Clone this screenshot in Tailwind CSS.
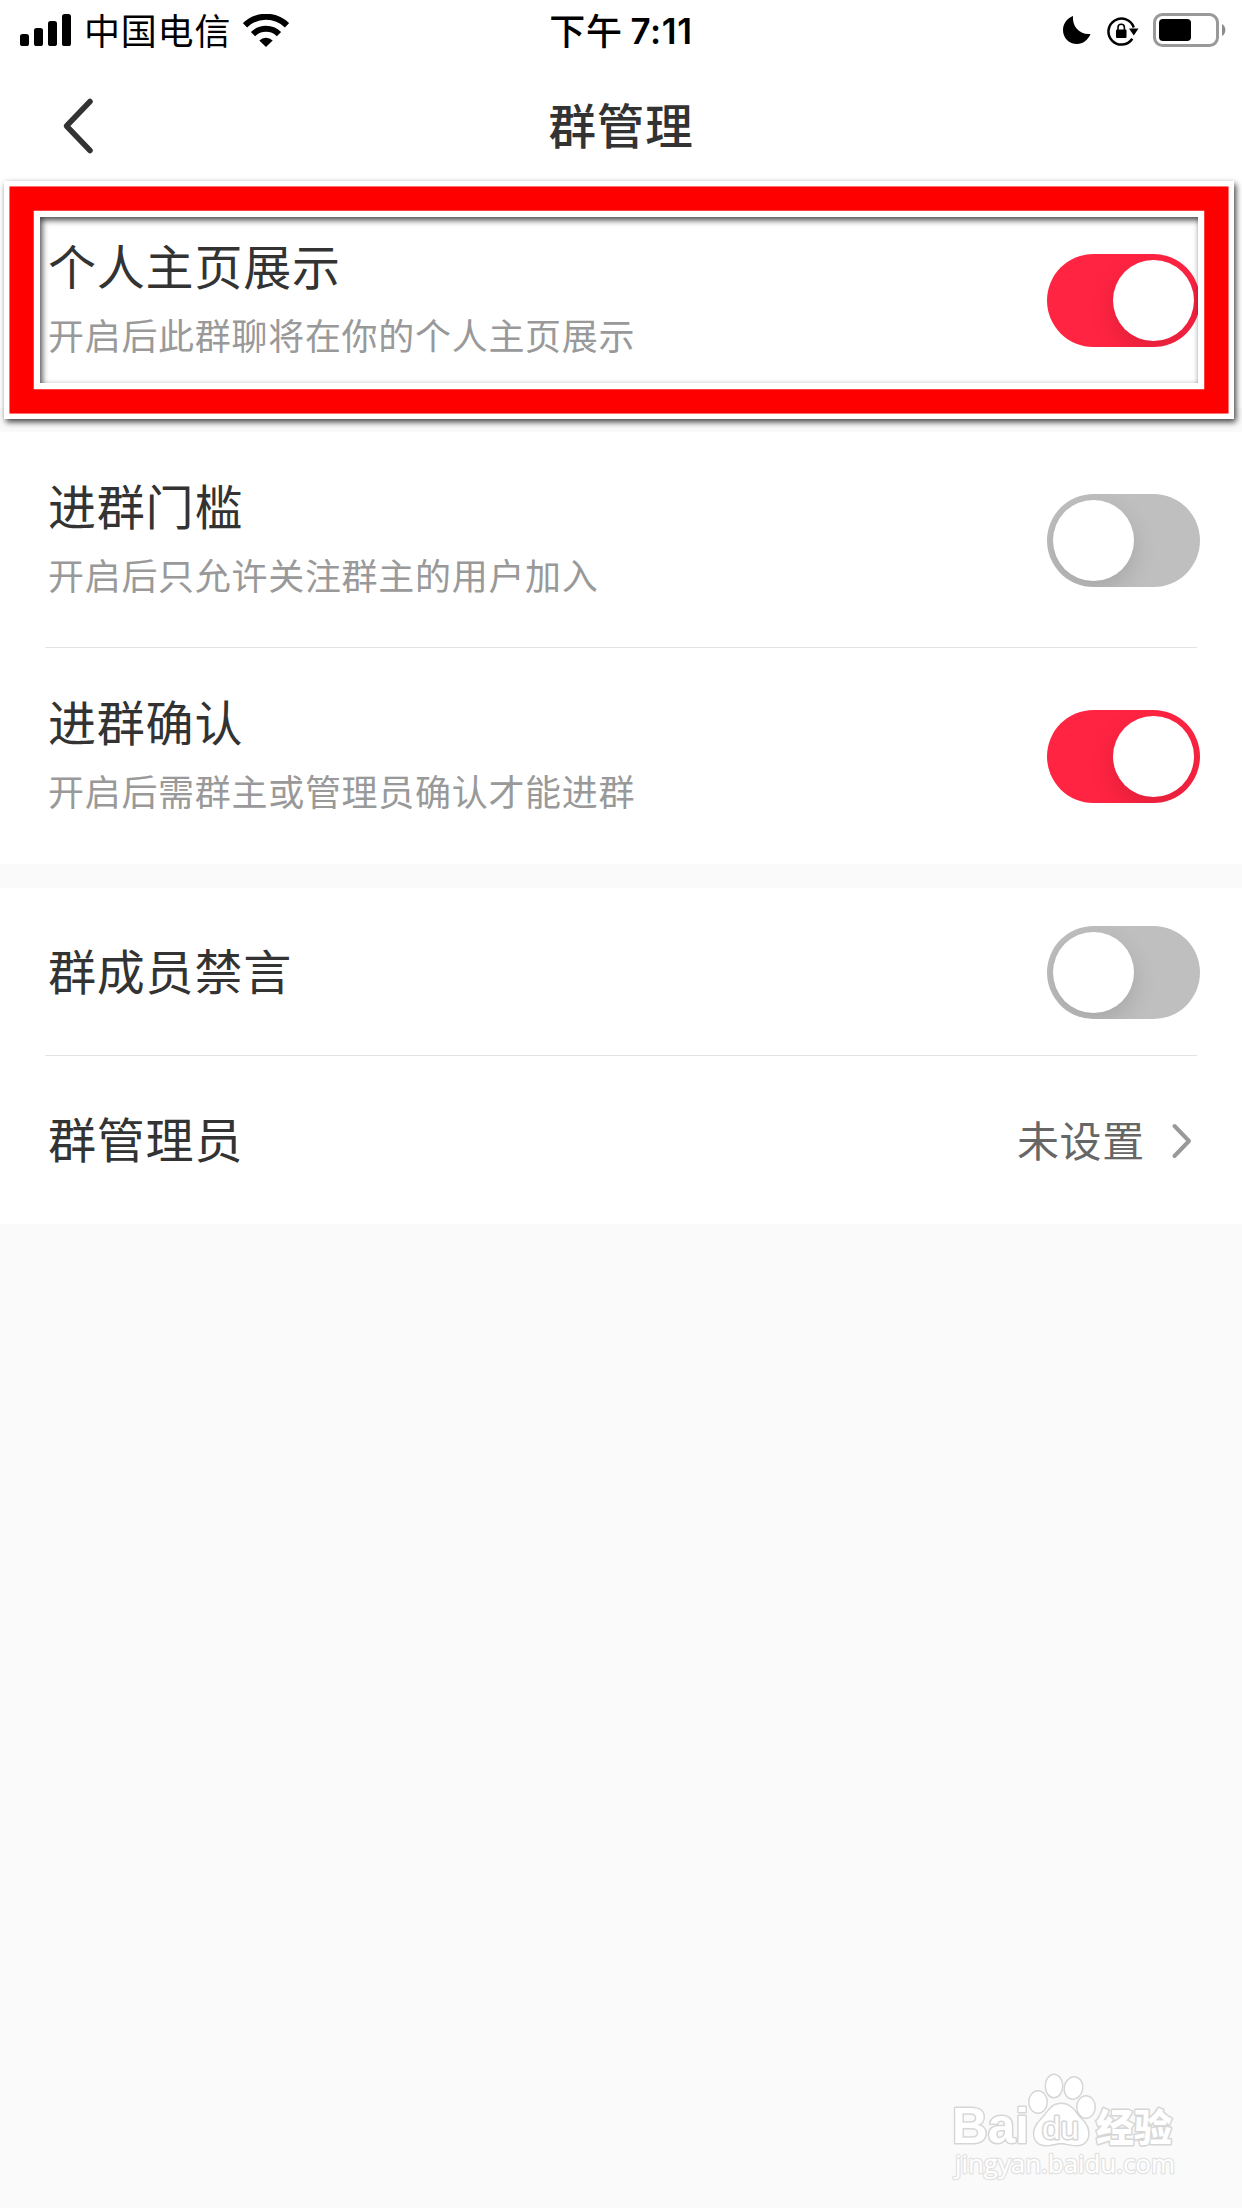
<!DOCTYPE html>
<html lang="zh-CN">
    <head>
        <meta charset="UTF-8">
        <meta name="viewport" content="width=device-width, initial-scale=1.0">
        <title>群管理</title>
        <script src="https://cdn.jsdelivr.net/npm/@tailwindcss/browser@4"></script>
    </head>
    <body class="bg-[#fafafa]">
        <div class="relative w-[1242px] h-[2208px] overflow-hidden bg-[#fafafa] text-[#333] font-['Noto_Sans_CJK_SC',sans-serif]">

            <!-- status bar -->
            <header class="relative flex h-[60px] items-center justify-between bg-white pl-5 pr-4 text-black">
                <div class="flex items-center">
                    <svg class="h-8 w-[51px]" viewBox="0 0 51 32" fill="currentColor">
                        <rect x="0" y="20" width="9" height="12" rx="2.6"/>
                        <rect x="14" y="14" width="9" height="18" rx="2.6"/>
                        <rect x="28" y="7" width="9" height="25" rx="2.6"/>
                        <rect x="42" y="0" width="9" height="32" rx="2.6"/>
                    </svg>
                    <span class="ml-[13px] mb-[2px] text-[36px] leading-[58px] tracking-[0.8px]">中国电信</span>
                    <svg class="ml-[12px] h-[33px] w-[46px]" viewBox="0 0 46 33" fill="none" stroke="currentColor">
                        <path d="M2 11.3a30 30 0 0 1 42 0" stroke-width="6"/>
                        <path d="M10 20.2a18.5 18.5 0 0 1 26 0" stroke-width="6"/>
                        <path d="M16.3 26.4a9.6 9.6 0 0 1 13.4 0L23 33z" fill="currentColor" stroke="none"/>
                    </svg>
                </div>
                <div class="absolute inset-x-0 flex items-center justify-center gap-[8px] font-medium">
                    <span class="mb-[2px] text-[36px] leading-[58px] tracking-[0.6px]">下午</span>
                    <span class="mt-[2px] font-['Inter'] text-[35px] leading-[58px] font-semibold tracking-[0.6px]">7:11</span>
                </div>
                <div class="flex items-center">
                    <svg class="h-[28px] w-[28px]" viewBox="0 0 28 28" fill="currentColor">
                        <path d="M10 0C9 10 16 19 27.500 18C25 24 20 28 14 28C6 28 0 22 0 14C0 8 4 2 10 0z"/>
                    </svg>
                    <svg class="ml-4 mt-[2px] h-[30px] w-[32px]" viewBox="0 0 32 30">
                        <path d="M25.300 22.800A13 13 0 1 1 26.800 11.500" fill="none" stroke="currentColor" stroke-width="2.500"/>
                        <path d="M22 12.500h9.500l-4.700 7z" fill="currentColor"/>
                        <rect x="9" y="13.500" width="10.500" height="8.500" rx="1" fill="currentColor"/>
                        <path d="M11 14v-2.500a3.200 3.200 0 0 1 6.400 0V14" fill="none" stroke="currentColor" stroke-width="1.600"/>
                    </svg>
                    <svg class="ml-[14px] h-[34px] w-[73px]" viewBox="0 0 73 34">
                        <rect x="1.500" y="1.500" width="63" height="31" rx="8" fill="none" stroke="#999" stroke-width="3"/>
                        <rect x="6" y="6" width="32" height="22" rx="4" fill="currentColor"/>
                        <path d="M69 11a7 7 0 0 1 0 12z" fill="#8c8c8c"/>
                    </svg>
                </div>
            </header>

            <!-- title bar -->
            <nav class="relative flex h-[132px] items-start justify-center bg-white">
                <svg class="absolute left-[62px] top-[37px] h-[58px] w-[34px]" viewBox="0 0 34 58" fill="none" stroke="#333" stroke-width="5.500" stroke-linecap="round" stroke-linejoin="round">
                    <path d="M28 4.500L4.500 29L28 53.500"/>
                </svg>
                <h1 class="mt-[28px] text-[47.500px] leading-[72px] font-medium tracking-[0.8px]">群管理</h1>
            </nav>

            <main>
                <section class="flex h-[216px] justify-between bg-white pl-[48px] pr-[42px]">
                    <div class="pt-[39px]">
                        <h2 class="text-[48px] leading-[66px] tracking-[0.8px]">个人主页展示</h2>
                        <p class="mt-[12px] text-[36px] leading-[50px] tracking-[0.7px] text-[#999]">开启后此群聊将在你的个人主页展示</p>
                    </div>
                    <div class="mt-[62px] flex h-[93px] w-[153px] justify-end overflow-hidden rounded-full bg-[#ff2442] p-[6px]">
                        <div class="size-[81px] rounded-full bg-white shadow-[0_9px_24px_rgba(0,0,0,0.13)]"></div>
                    </div>
                </section>

                <section class="mt-6 bg-white">
                    <div class="flex h-[215px] justify-between pl-[48px] pr-[42px]">
                        <div class="pt-[39px]">
                            <h2 class="text-[48px] leading-[66px] tracking-[0.8px]">进群门槛</h2>
                            <p class="mt-[12px] text-[36px] leading-[50px] tracking-[0.7px] text-[#999]">开启后只允许关注群主的用户加入</p>
                        </div>
                        <div class="mt-[62px] flex h-[93px] w-[153px] overflow-hidden rounded-full bg-[#bfbfbf] p-[6px]">
                            <div class="size-[81px] rounded-full bg-white shadow-[0_9px_24px_rgba(0,0,0,0.13)]"></div>
                        </div>
                    </div>
                    <hr class="mx-[45px] h-px border-0 bg-[#e2e2e2]">
                    <div class="flex h-[216px] justify-between pl-[48px] pr-[42px]">
                        <div class="pt-[39px]">
                            <h2 class="text-[48px] leading-[66px] tracking-[0.8px]">进群确认</h2>
                            <p class="mt-[12px] text-[36px] leading-[50px] tracking-[0.7px] text-[#999]">开启后需群主或管理员确认才能进群</p>
                        </div>
                        <div class="mt-[62px] flex h-[93px] w-[153px] justify-end overflow-hidden rounded-full bg-[#ff2442] p-[6px]">
                            <div class="size-[81px] rounded-full bg-white shadow-[0_9px_24px_rgba(0,0,0,0.13)]"></div>
                        </div>
                    </div>
                </section>

                <section class="mt-6 bg-white">
                    <div class="flex h-[167px] justify-between pl-[48px] pr-[42px]">
                        <h2 class="mt-[48px] text-[48px] leading-[66px] tracking-[0.8px]">群成员禁言</h2>
                        <div class="mt-[38px] flex h-[93px] w-[153px] overflow-hidden rounded-full bg-[#bfbfbf] p-[6px]">
                            <div class="size-[81px] rounded-full bg-white shadow-[0_9px_24px_rgba(0,0,0,0.13)]"></div>
                        </div>
                    </div>
                    <hr class="mx-[45px] h-px border-0 bg-[#e2e2e2]">
                    <div class="flex h-[168px] justify-between pl-[48px] pr-[50px]">
                        <h2 class="mt-[48px] text-[48px] leading-[66px] tracking-[0.8px]">群管理员</h2>
                        <div class="flex items-center">
                            <span class="mb-[3px] text-[42px] leading-[60px] tracking-[0.7px] text-[#666]">未设置</span>
                            <svg class="ml-[26px] mt-px h-[36px] w-[21px]" viewBox="0 0 21 36" fill="none" stroke="#999" stroke-width="4" stroke-linecap="round" stroke-linejoin="round">
                                <path d="M3.500 3L18 18L3.500 33"/>
                            </svg>
                        </div>
                    </div>
                </section>
            </main>

            <!-- red highlight frame over the first row -->
            <div class="absolute left-[4px] top-[181px] h-[238px] w-[1230px] border-[36px] border-white shadow-[2px_3px_6px_rgba(0,0,0,0.75)]">
                <div class="h-full w-full shadow-[inset_2px_3px_6px_rgba(0,0,0,0.75)]"></div>
                <svg class="absolute -left-[36px] -top-[36px] h-[238px] w-[1230px] max-w-none" viewBox="0 0 1230 238" fill="none">
                    <rect x="17.600" y="17.600" width="1194.800" height="202.800" stroke="#f00" stroke-width="24.300"/>
                </svg>
            </div>

            <!-- watermark -->
            <svg class="absolute left-[940px] top-[2066px] h-[124px] w-[250px]" viewBox="0 0 250 124" fill="#fff" stroke="#d6d6d6" stroke-width="3" paint-order="stroke" stroke-linejoin="round">
                <text x="12" y="77" class="font-['Liberation_Sans'] text-[50px] font-bold" textLength="77" lengthAdjust="spacingAndGlyphs">Bai</text>
                <ellipse cx="98" cy="36" rx="8.500" ry="10.500"/>
                <ellipse cx="114" cy="20" rx="8" ry="11"/>
                <ellipse cx="133.500" cy="22" rx="8.500" ry="10.500" transform="rotate(12 133.500 22)"/>
                <ellipse cx="146" cy="41" rx="8.500" ry="10.500"/>
                <path d="M121 38c11 0 14 9 20 15c11 10 9 26-4 26c-8 0-10-2-16-2s-8 2-15 2c-14 0-15-16-5-25c7-7 10-16 20-16z"/>
                <text x="102" y="73" class="font-['Liberation_Sans'] text-[31px]" textLength="37" lengthAdjust="spacingAndGlyphs">du</text>
                <text x="156" y="75" class="font-['Noto_Sans_CJK_SC'] text-[38px] font-black">经验</text>
                <text x="15" y="107" class="font-['Open_Sans'] text-[26px]" stroke="#e2e2e2" stroke-width="2.500" textLength="220">jingyan.baidu.com</text>
            </svg>

        </div>
    </body>
</html>
